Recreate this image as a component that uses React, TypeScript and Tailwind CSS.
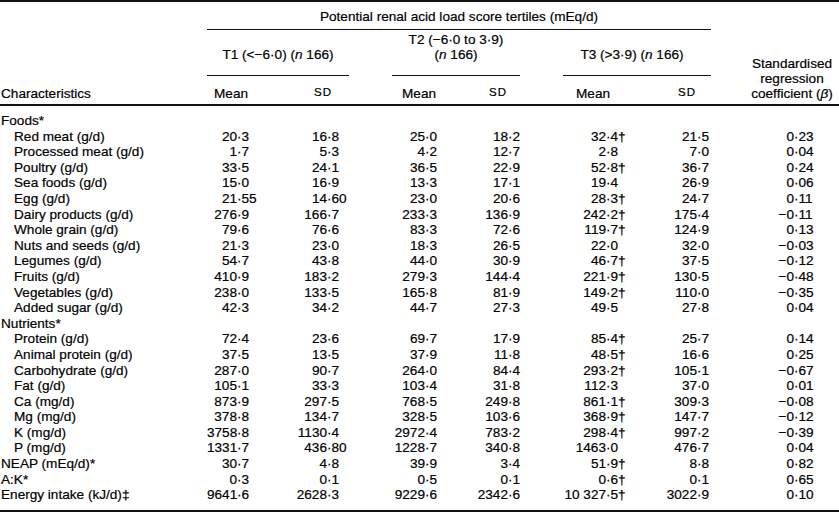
import { clsx as cn } from 'clsx';

const COLS = 'grid grid-cols-[207px_78px_64px_43px_78px_50px_43px_87px_61px_128px]';

// column start + width of the integer part (decimal alignment) for each numeric column
const NUM_COLS = [
    { start: 'col-start-2', w: 'w-[30px]' },
    { start: 'col-start-3', w: 'w-[42px]' },
    { start: 'col-start-5', w: 'w-[33px]' },
    { start: 'col-start-6', w: 'w-[38px]' },
    { start: 'col-start-8', w: 'w-[43px]' },
    { start: 'col-start-9', w: 'w-[47px]' },
    { start: 'col-start-10', w: 'w-[83px]' },
];

type Row = { label: string; sub?: boolean; values?: string[] };

const rows: Row[] = [
    { label: 'Foods*' },
    { label: 'Red meat (g/d)', sub: true, values: ['20·3', '16·8', '25·0', '18·2', '32·4†', '21·5', '0·23'] },
    { label: 'Processed meat (g/d)', sub: true, values: ['1·7', '5·3', '4·2', '12·7', '2·8', '7·0', '0·04'] },
    { label: 'Poultry (g/d)', sub: true, values: ['33·5', '24·1', '36·5', '22·9', '52·8†', '36·7', '0·24'] },
    { label: 'Sea foods (g/d)', sub: true, values: ['15·0', '16·9', '13·3', '17·1', '19·4', '26·9', '0·06'] },
    { label: 'Egg (g/d)', sub: true, values: ['21·55', '14·60', '23·0', '20·6', '28·3†', '24·7', '0·11'] },
    { label: 'Dairy products (g/d)', sub: true, values: ['276·9', '166·7', '233·3', '136·9', '242·2†', '175·4', '−0·11'] },
    { label: 'Whole grain (g/d)', sub: true, values: ['79·6', '76·6', '83·3', '72·6', '119·7†', '124·9', '0·13'] },
    { label: 'Nuts and seeds (g/d)', sub: true, values: ['21·3', '23·0', '18·3', '26·5', '22·0', '32·0', '−0·03'] },
    { label: 'Legumes (g/d)', sub: true, values: ['54·7', '43·8', '44·0', '30·9', '46·7†', '37·5', '−0·12'] },
    { label: 'Fruits (g/d)', sub: true, values: ['410·9', '183·2', '279·3', '144·4', '221·9†', '130·5', '−0·48'] },
    { label: 'Vegetables (g/d)', sub: true, values: ['238·0', '133·5', '165·8', '81·9', '149·2†', '110·0', '−0·35'] },
    { label: 'Added sugar (g/d)', sub: true, values: ['42·3', '34·2', '44·7', '27·3', '49·5', '27·8', '0·04'] },
    { label: 'Nutrients*' },
    { label: 'Protein (g/d)', sub: true, values: ['72·4', '23·6', '69·7', '17·9', '85·4†', '25·7', '0·14'] },
    { label: 'Animal protein (g/d)', sub: true, values: ['37·5', '13·5', '37·9', '11·8', '48·5†', '16·6', '0·25'] },
    { label: 'Carbohydrate (g/d)', sub: true, values: ['287·0', '90·7', '264·0', '84·4', '293·2†', '105·1', '−0·67'] },
    { label: 'Fat (g/d)', sub: true, values: ['105·1', '33·3', '103·4', '31·8', '112·3', '37·0', '0·01'] },
    { label: 'Ca (mg/d)', sub: true, values: ['873·9', '297·5', '768·5', '249·8', '861·1†', '309·3', '−0·08'] },
    { label: 'Mg (mg/d)', sub: true, values: ['378·8', '134·7', '328·5', '103·6', '368·9†', '147·7', '−0·12'] },
    { label: 'K (mg/d)', sub: true, values: ['3758·8', '1130·4', '2972·4', '783·2', '298·4†', '997·2', '−0·39'] },
    { label: 'P (mg/d)', sub: true, values: ['1331·7', '436·80', '1228·7', '340·8', '1463·0', '476·7', '0·04'] },
    { label: 'NEAP (mEq/d)*', values: ['30·7', '4·8', '39·9', '3·4', '51·9†', '8·8', '0·82'] },
    { label: 'A:K*', values: ['0·3', '0·1', '0·5', '0·1', '0·6†', '0·1', '0·65'] },
    { label: 'Energy intake (kJ/d)‡', values: ['9641·6', '2628·3', '9229·6', '2342·6', '10 327·5†', '3022·9', '0·10'] },
];

function Num({ value, w }: { value: string; w: string }) {
    const [int, frac] = value.split('·');
    return (
        <span className="whitespace-nowrap">
            <span className={cn(w, 'inline-block text-right')}>{int}</span>
            <span>·{frac}</span>
        </span>
    );
}

function Sd() {
    return <span className="text-[11.5px] tracking-[1px]">SD</span>;
}

export default function App() {
    return (
        <div className="w-[839px] h-[513px] bg-white text-black text-[13.6px] leading-[15.6px] font-['Liberation_Sans',Arial,sans-serif] [-webkit-text-stroke:0.2px_#000]">
            {/* Header */}
            <div className={cn(COLS, 'grid-rows-[28px_46px_28px] border-t-2 border-b-2 border-[#111]')}>
                <div className="col-start-2 col-end-10 row-start-1 border-b border-[#111] pt-[7px] text-center">
                    Potential renal acid load score tertiles (mEq/d)
                </div>

                <div className="col-start-2 col-end-4 row-start-2 flex items-end justify-center border-b border-[#111] pb-[12px]">
                    <span>T1 (&lt;−6·0) (<i>n</i> 166)</span>
                </div>
                <div className="col-start-5 col-end-7 row-start-2 flex items-end justify-center border-b border-[#111] pb-[12px] text-center">
                    <span>T2 (−6·0 to 3·9)<br />(<i>n</i> 166)</span>
                </div>
                <div className="col-start-8 col-end-10 row-start-2 flex items-end justify-center border-b border-[#111] pb-[12px] pr-[10px]">
                    <span>T3 (&gt;3·9) (<i>n</i> 166)</span>
                </div>

                <div className="col-start-10 row-start-2 row-end-4 flex flex-col items-center justify-end pb-[3px] pl-[34px] leading-[15px]">
                    <span>Standardised</span>
                    <span>regression</span>
                    <span>coefficient (<i>β</i>)</span>
                </div>

                <div className="col-start-1 row-start-3 flex items-end pb-[2px] pl-px">Characteristics</div>
                <div className="col-start-2 row-start-3 flex items-end pb-[2px] pl-[7px]">Mean</div>
                <div className="col-start-3 row-start-3 flex items-end pb-[3px] pl-[29px]"><Sd /></div>
                <div className="col-start-5 row-start-3 flex items-end pb-[2px] pl-[10px]">Mean</div>
                <div className="col-start-6 row-start-3 flex items-end pb-[3px] pl-[19px]"><Sd /></div>
                <div className="col-start-8 row-start-3 flex items-end pb-[2px] pl-[13px]">Mean</div>
                <div className="col-start-9 row-start-3 flex items-end pb-[3px] pl-[28px]"><Sd /></div>
            </div>

            {/* Body */}
            <div className={cn(COLS, 'auto-rows-[15.6px] border-b-2 border-[#111] pt-[7px] pb-[7px]')}>
                {rows.map(r => (
                    <div key={r.label} className="contents">
                        <div className={cn('col-start-1 whitespace-nowrap', r.sub ? 'pl-[14px]' : 'pl-px')}>{r.label}</div>
                        {r.values?.map((v, i) => (
                            <div key={i} className={NUM_COLS[i].start}>
                                <Num value={v} w={NUM_COLS[i].w} />
                            </div>
                        ))}
                    </div>
                ))}
            </div>
        </div>
    );
}
